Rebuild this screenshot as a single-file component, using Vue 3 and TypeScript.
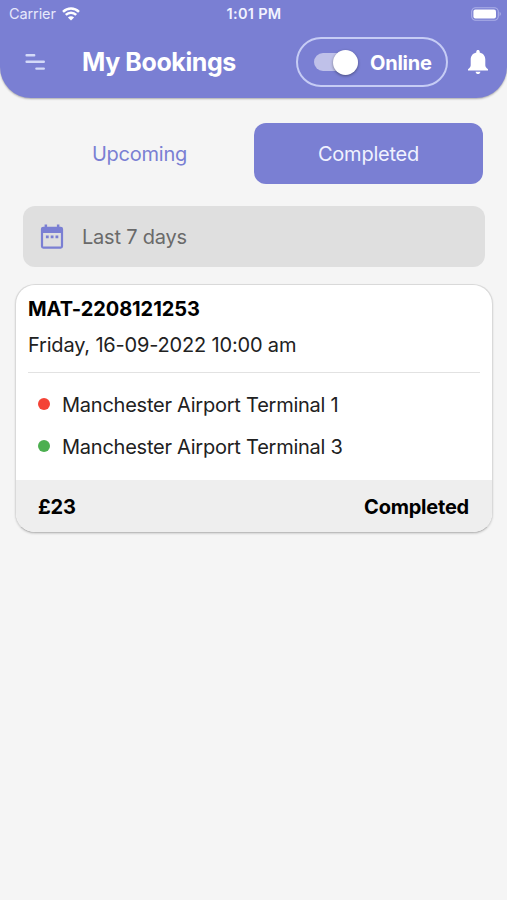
<script setup lang="ts">
import { ref } from 'vue'

interface Stop {
  kind: 'pickup' | 'dropoff'
  name: string
}

interface Booking {
  id: string
  date: string
  stops: Stop[]
  price: string
  status: string
}

type Tab = 'Upcoming' | 'Completed'

const tabs: Tab[] = ['Upcoming', 'Completed']
const activeTab = ref<Tab>('Completed')
const online = ref(true)

const bookings: Booking[] = [
  {
    id: 'MAT-2208121253',
    date: 'Friday, 16-09-2022 10:00 am',
    stops: [
      { kind: 'pickup', name: 'Manchester Airport Terminal 1' },
      { kind: 'dropoff', name: 'Manchester Airport Terminal 3' },
    ],
    price: '£23',
    status: 'Completed',
  },
]
</script>

<template>
  <div class="screen">
    <header class="header">
      <div class="status">
        <div class="carrier">
          <span>Carrier</span>
          <svg class="wifi" viewBox="0 0 18 14" width="18" height="14">
            <path d="M1 4.8C5.6.4 12.4.4 17 4.8" />
            <path d="M3.8 7.9c3-2.9 7.4-2.9 10.4 0" />
            <path class="solid" d="M9 13.6 5.9 10.5c1.7-1.7 4.5-1.7 6.2 0z" />
          </svg>
        </div>
        <span class="time">1:01 PM</span>
        <svg class="battery" viewBox="0 0 31 14" width="31" height="14">
          <rect class="shell" x=".7" y=".7" width="26.6" height="12.6" rx="4" />
          <rect class="charge" x="2.4" y="2.4" width="22.6" height="9.2" rx="2" />
          <path class="tip" d="M28.6 4.8q2.6 2.2 0 4.4z" />
        </svg>
      </div>
      <div class="bar">
        <button class="menu" aria-label="Menu">
          <svg viewBox="0 0 20 16" width="20" height="16">
            <path d="M1.6 1.2h7.6M1.6 7.8h17.2M11.4 14.6h7.4" />
          </svg>
        </button>
        <h1 class="title">My Bookings</h1>
        <button class="online" @click="online = !online">
          <span class="switch" :class="{ off: !online }"><i class="knob"></i></span>
          <span class="online-text">{{ online ? 'Online' : 'Offline' }}</span>
        </button>
        <svg class="bell" viewBox="0 0 20 24" width="20" height="24">
          <path d="M10 0c1 0 1.7.7 1.7 1.7v.8c3.5.8 5.6 3.4 5.6 7v5.8c0 1.6.9 2.7 2.7 4v1.2H0v-1.2c1.800-1.300 2.700-2.400 2.700-4V9.500c0-3.600 2.100-6.200 5.600-7v-.8C8.300.7 9 0 10 0zM7.600 21.700h4.800c-.2 1.400-1.200 2.300-2.400 2.300s-2.200-.9-2.400-2.300z" />
        </svg>
      </div>
    </header>

    <main class="content">
      <nav class="tabs">
        <button
          v-for="tab in tabs"
          :key="tab"
          class="tab"
          :class="{ active: tab === activeTab }"
          @click="activeTab = tab"
        >{{ tab }}</button>
      </nav>

      <button class="filter">
        <svg viewBox="0 0 24 26" width="24" height="26">
          <path
            fill-rule="evenodd"
            d="M4.600.4h2.500v2.300h9.800V.4h2.500v2.300h1.300a2.400 2.400 0 0 1 2.400 2.400v17.200a2.400 2.400 0 0 1-2.400 2.400H3.300a2.400 2.400 0 0 1-2.400-2.400V5.100a2.400 2.400 0 0 1 2.400-2.400h1.300zM3.100 8.900v13.600h17.800V8.900z"
          />
          <path d="M5.900 11.400h2.800v2.800H5.900zM10.700 11.400h2.800v2.800h-2.800zM15.500 11.400h2.800v2.800h-2.800z" />
        </svg>
        <span>Last 7 days</span>
      </button>

      <article v-for="booking in bookings" :key="booking.id" class="card">
        <div class="details">
          <h2 class="reference">{{ booking.id }}</h2>
          <p class="date">{{ booking.date }}</p>
          <ul class="stops">
            <li v-for="stop in booking.stops" :key="stop.name">
              <i class="dot" :class="stop.kind"></i>
              <span>{{ stop.name }}</span>
            </li>
          </ul>
        </div>
        <footer class="summary">
          <span class="price">{{ booking.price }}</span>
          <span class="state">{{ booking.status }}</span>
        </footer>
      </article>
    </main>
  </div>
</template>

<style>
body {
  background: #f5f5f5;
}
</style>

<style scoped>
.screen {
  box-sizing: border-box;
  width: 100%;
  min-height: 900px;
  background: #f5f5f5;
  color: #212121;
  font-family: Inter, 'Liberation Sans', sans-serif;
  font-size: 20px;
  letter-spacing: -0.22px;
}

button {
  padding: 0;
  border: 0;
  background: none;
  color: inherit;
  font: inherit;
  letter-spacing: inherit;
}

.header {
  height: 98px;
  border-radius: 0 0 31px 31px;
  background: #7a7fd3;
  box-shadow: 0 1px 2px rgba(0, 0, 0, 0.3);
  color: #fff;
}

.status {
  display: grid;
  grid-template-columns: 1fr auto 1fr;
  align-items: center;
  height: 27px;
  padding: 0 5px 0 9px;
}

.carrier {
  display: flex;
  align-items: center;
  gap: 6px;
  color: #e6e8fb;
  font-size: 14.5px;
  letter-spacing: -0.1px;
}

.wifi {
  fill: none;
  stroke: #fff;
  stroke-width: 2.5;
}

.wifi .solid {
  fill: #fff;
  stroke: none;
}

.time {
  margin-right: 3px;
  color: #f2f3ff;
  font-size: 14.5px;
  font-weight: 600;
  letter-spacing: 0.3px;
}

.battery {
  justify-self: end;
}

.shell {
  fill: none;
  stroke: #acb0e8;
  stroke-width: 1.1;
}

.charge {
  fill: #fff;
}

.tip {
  fill: #acb0e8;
}

.bar {
  display: flex;
  align-items: center;
  height: 70px;
  padding: 0 19px 0 25px;
}

.menu {
  display: flex;
  width: 57px;
}

.menu path {
  fill: none;
  stroke: #d4daf8;
  stroke-width: 2.4;
  stroke-linecap: round;
}

.title {
  flex: 1;
  margin: 0;
  font-size: 25px;
  font-weight: 700;
  letter-spacing: -0.4px;
  line-height: 30px;
  white-space: nowrap;
}

.online {
  box-sizing: border-box;
  display: flex;
  align-items: center;
  width: 152px;
  height: 50px;
  margin-right: 20px;
  padding-left: 16px;
  border: 2px solid #c6ccf5;
  border-radius: 25px;
}

.switch {
  display: flex;
  align-items: center;
  justify-content: flex-end;
  width: 44px;
  height: 18px;
  margin-right: 12px;
  border-radius: 9px;
  background: #bfc1e9;
}

.switch.off {
  justify-content: flex-start;
}

.knob {
  width: 25px;
  height: 25px;
  border-radius: 50%;
  background: #fff;
  box-shadow: 0 1px 3px rgba(0, 0, 0, 0.4);
}

.online-text {
  padding-top: 2px;
  font-size: 20px;
  font-weight: 700;
  line-height: 24px;
}

.bell {
  fill: #fff;
}

.content {
  padding: 25px 14px 0 15px;
}

.tabs {
  display: grid;
  grid-template-columns: 1fr 1fr;
  height: 61px;
  margin: 0 10px;
}

.tab {
  border-radius: 12px;
  color: #7a7fd3;
}

.tab.active {
  background: #7a7fd3;
  color: #f0f2ff;
}

.filter {
  display: flex;
  align-items: center;
  gap: 18px;
  width: 462px;
  height: 61px;
  margin: 22px 0 17px 8px;
  padding-left: 17px;
  border-radius: 12px;
  background: #dfdfdf;
  color: #6a6a6a;
}

.filter svg {
  fill: #7a7fd3;
}

.card {
  box-sizing: border-box;
  height: 249px;
  overflow: hidden;
  border: 1px solid #d9d9d9;
  border-bottom-color: #bdbdbd;
  border-radius: 20px;
  background: #fff;
  box-shadow: 0 1px 2px rgba(0, 0, 0, 0.14);
}

.details {
  height: 195px;
  padding: 0 12px;
  box-sizing: border-box;
}

.reference {
  margin: 0;
  padding-top: 12px;
  color: #000;
  font-size: 20px;
  font-weight: 700;
  letter-spacing: -0.08px;
  line-height: 24px;
}

.date {
  margin: 0;
  padding: 12px 0 15px;
  border-bottom: 1px solid #e2e2e2;
  letter-spacing: -0.18px;
  line-height: 24px;
}

.stops {
  margin: 0;
  padding: 20px 0 0 10px;
  list-style: none;
}

.stops li {
  display: flex;
  align-items: center;
  gap: 12px;
  height: 24px;
  margin-bottom: 18px;
  letter-spacing: -0.24px;
}

.dot {
  width: 12px;
  height: 12px;
  margin-top: -2px;
  border-radius: 50%;
}

.pickup {
  background: #f44336;
}

.dropoff {
  background: #4caf50;
}

.summary {
  display: flex;
  align-items: center;
  justify-content: space-between;
  height: 52px;
  padding: 1px 23px 0 22px;
  box-sizing: border-box;
  background: #eee;
  color: #000;
  font-weight: 700;
}
</style>
